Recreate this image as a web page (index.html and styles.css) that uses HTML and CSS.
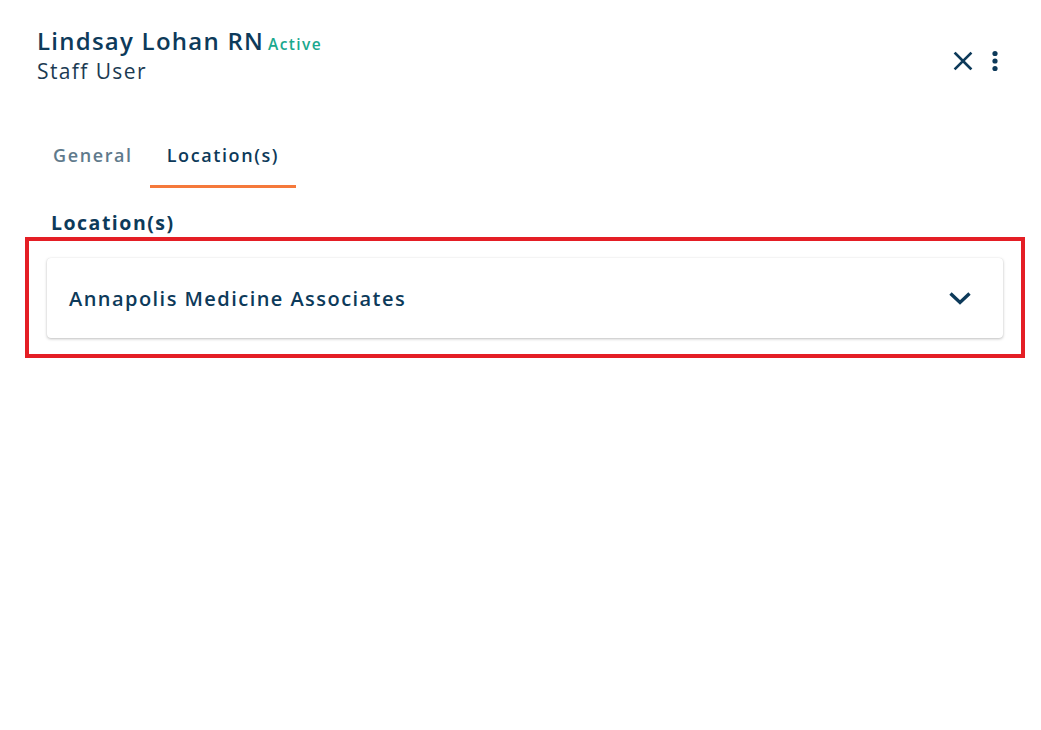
FILE: index.html
```html
<!DOCTYPE html>
<html>
<head>
<meta charset="utf-8">
<link rel="stylesheet" href="styles.css">
</head>
<body>
<div class="panel">
  <header class="head">
    <div class="who">
      <div class="name-row"><span class="name">Lindsay Lohan RN</span><span class="status">Active</span></div>
      <div class="role">Staff User</div>
    </div>
    <div class="actions">
      <svg class="icon-x" width="22" height="22" viewBox="0 0 22 22"><path d="M3.5 3.5 L18.5 18.5 M18.5 3.5 L3.5 18.5" stroke="#0d3a5a" stroke-width="2.6" stroke-linecap="square"/></svg>
      <svg class="icon-dots" width="8" height="22" viewBox="0 0 8 22"><circle cx="4" cy="3.5" r="2.6" fill="#0d3a5a"/><circle cx="4" cy="11" r="2.6" fill="#0d3a5a"/><circle cx="4" cy="18.5" r="2.6" fill="#0d3a5a"/></svg>
    </div>
  </header>
  <nav class="tabs">
    <div class="tab">General</div>
    <div class="tab active">Location(s)</div>
  </nav>
  <h2 class="section-title">Location(s)</h2>
  <div class="highlight">
    <div class="card">
      <span class="card-title">Annapolis Medicine Associates</span>
      <svg class="chev" width="24" height="16" viewBox="0 0 24 16"><path d="M2.5 3.5 L12 12.5 L21.5 3.5" fill="none" stroke="#0d3a5a" stroke-width="3.4"/></svg>
    </div>
  </div>
</div>
</body>
</html>
```
FILE: styles.css
```css
* { box-sizing: border-box; }
html, body { margin: 0; padding: 0; background: #fff; }
body { font-family: "Open Sans", "Noto Sans", sans-serif; color: #0d3a5a; }
.panel { width: 1041px; height: 730px; padding: 24px 17px 0 25px; }
.head { display: flex; justify-content: space-between; align-items: flex-start; padding-left: 12px; }
.name-row { display: flex; align-items: baseline; gap: 4px; height: 34px; }
.name { font-size: 24px; font-weight: 600; letter-spacing: 1.25px; color: #0d3a5a; }
.status { font-size: 15.5px; font-weight: 600; color: #1aa88e; letter-spacing: 1.4px; }
.role { font-size: 21px; font-weight: 400; color: #1b3a52; letter-spacing: 1.4px; line-height: 27px; }
.actions { display: flex; align-items: center; gap: 17px; margin-top: 26px; padding-right: 25px; }
.tabs { display: flex; margin-top: 42px; padding-left: 11px; }
.tab { font-size: 18px; font-weight: 600; color: #5f7a8c; padding: 16px 17px 18px 17px; letter-spacing: 1.6px; line-height: 24px; border-bottom: 3px solid transparent; }
.tab.active { color: #0d3a5a; border-bottom-color: #f5793b; }
.section-title { margin: 21px 0 0 26px; font-size: 19.5px; font-weight: 700; color: #0d3a5a; letter-spacing: 1.5px; line-height: 28px; }
.highlight { border: 4px solid #e41e25; margin-top: 0; padding: 17px 18px 16px 18px; width: 1000px; }
.card { height: 80px; display: flex; align-items: center; justify-content: space-between; padding: 0 31px 0 22px; border-radius: 4px; background: #fff; box-shadow: 0 1px 3px rgba(0,0,0,0.25), 0 0 1px rgba(0,0,0,0.1); }
.card-title { font-size: 20px; font-weight: 600; color: #0d3a5a; letter-spacing: 1.45px; }
.chev { display: block; }
```
